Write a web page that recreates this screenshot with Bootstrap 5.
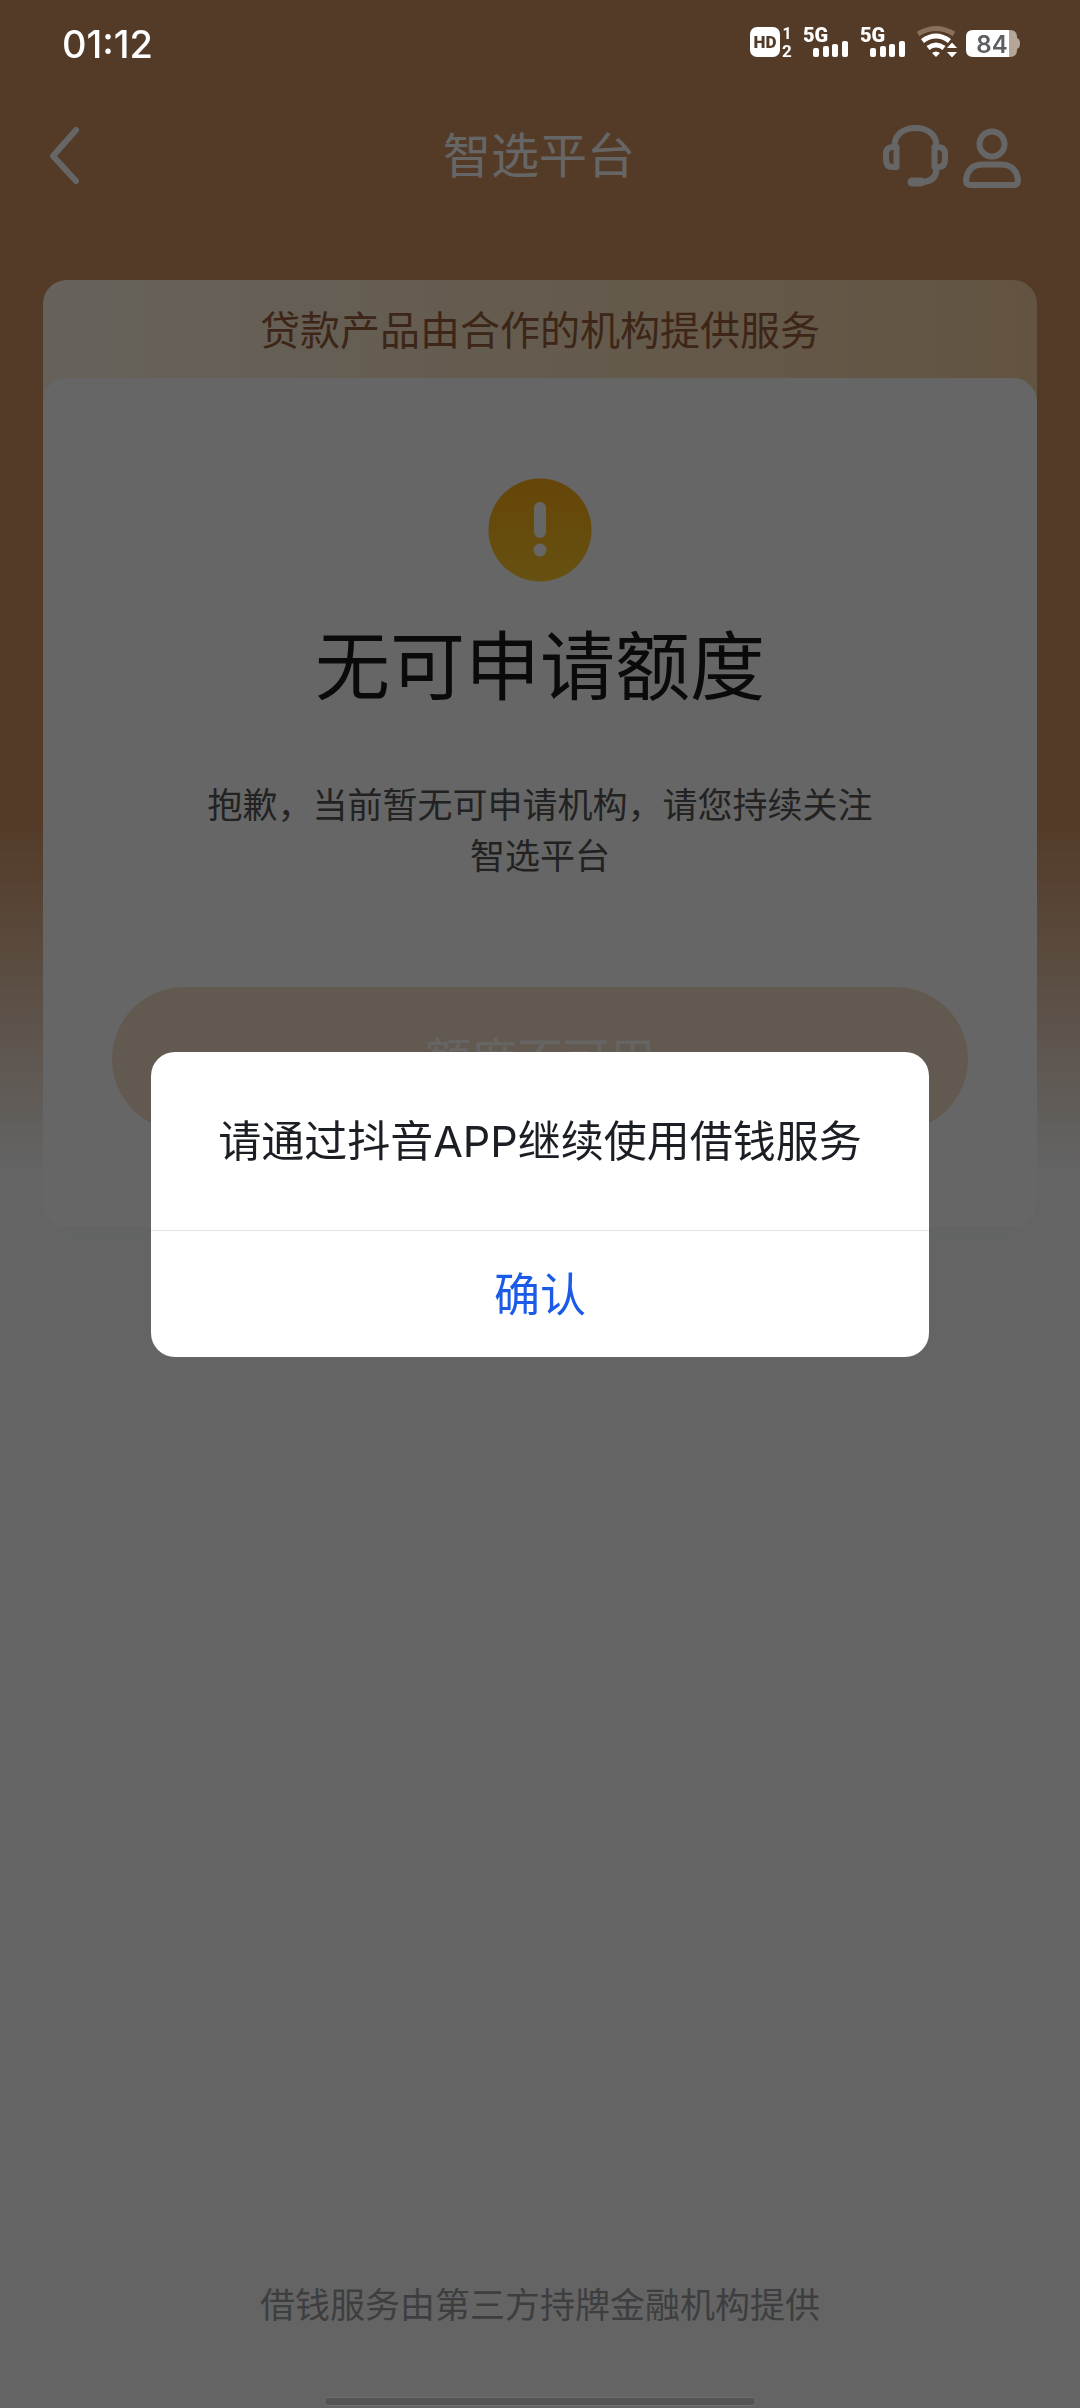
<!DOCTYPE html>
<html lang="zh-CN">
<head>
<meta charset="utf-8">
<meta name="viewport" content="width=device-width, initial-scale=1">
<title>智选平台</title>
<link href="https://cdn.jsdelivr.net/npm/bootstrap@5.3.0/dist/css/bootstrap.min.css" rel="stylesheet">
<style>
  body { font-family: Inter, "Noto Sans CJK SC", sans-serif; background: #fafafa; }
  .app-page { background: linear-gradient(180deg, #d29464 0, #d29464 824px, #fafafa 1170px); }
  .status-bar { height: 108px; padding: 24px 60px 48px 62px; z-index: 1060; color: #fff; }
  .clock { font-size: 38px; line-height: 40px; font-weight: 500; }
  .app-nav { display: grid; grid-template-columns: 1fr auto 1fr; height: 96px; padding: 0 50px 0 48px; }
  .app-nav h1 { font-size: 48px; line-height: 64px; }
  .icon-btn { color: #fff; }
  .loan-panel { margin: 76px 43px 0; border-radius: 24px; background: linear-gradient(90deg, #fff5e4, #f8d2a3); }
  .loan-note { font-size: 40px; line-height: 58px; padding: 22px 0 18px; color: #9a5f3a; }
  .loan-card { border: 0; border-radius: 24px; padding: 100px 69px 96px; box-shadow: 0 20px 10px -10px #f6fafa; }
  .loan-card h2 { font-size: 75px; line-height: 90px; margin: 40px 0 68px; color: #1a1a1a; }
  .loan-card p { font-size: 35px; line-height: 51px; width: 680px; margin: 0 auto 105px; color: #555; }
  .limit-btn { font-size: 46px; line-height: 144px; }
  .limit-btn:disabled { color: #fffcfa; background: #f5dfca; border: 0; opacity: 1; }
  .provider { font-size: 35px; line-height: 50px; margin-bottom: 78px; color: #999ca0; }
  .home-bar { width: 40%; height: 9px; bottom: 2px; z-index: 1060; background: #545454; border: 1px solid #707070; }
  .veil { --bs-backdrop-opacity: .6; }
  .app-modal { --bs-modal-width: 778px; --bs-modal-border-radius: 24px; --bs-modal-border-width: 0; }
  .modal-msg { font-size: 43px; line-height: 60px; padding: 59px 0; color: #1b1e24; border-bottom: 1px solid #e4e4e6; }
  .confirm-btn { font-size: 46px; line-height: 126px; color: #1c5be8; }
</style>
<script src="https://cdn.jsdelivr.net/npm/bootstrap@5.3.0/dist/js/bootstrap.bundle.min.js"></script>
</head>
<body>
<div class="app-page d-flex flex-column min-vh-100">
  <div class="status-bar position-relative d-flex justify-content-between">
    <time class="clock">01:12</time>
    <div class="d-flex align-items-start">
      <svg width="54" height="36" viewBox="0 0 54 36" fill="#fff" aria-label="HD 1 2">
        <rect y="3" width="30" height="30" rx="7"/>
        <text x="15" y="24" text-anchor="middle" font-family="Roboto" font-weight="900" font-size="17" fill="#533a27">HD</text>
        <text x="37" y="15" text-anchor="middle" font-family="Roboto" font-weight="700" font-size="16">1</text>
        <text x="37" y="33" text-anchor="middle" font-family="Roboto" font-weight="700" font-size="17">2</text>
      </svg>
      <svg width="57" height="36" viewBox="0 0 57 36" fill="#fff" aria-label="5G">
        <text x="-1" y="18" font-family="Roboto" font-weight="900" font-size="20">5G</text>
        <rect x="9" y="24" width="6" height="9" rx="2"/><rect x="19" y="22" width="6" height="11" rx="2"/><rect x="28" y="20" width="6" height="13" rx="2"/><rect x="38" y="17" width="6" height="16" rx="2"/>
      </svg>
      <svg width="56" height="36" viewBox="0 0 56 36" fill="#fff" aria-label="5G">
        <text x="-1" y="18" font-family="Roboto" font-weight="900" font-size="20">5G</text>
        <rect x="9" y="24" width="6" height="9" rx="2"/><rect x="19" y="22" width="6" height="11" rx="2"/><rect x="28" y="20" width="6" height="13" rx="2"/><rect x="38" y="17" width="6" height="16" rx="2"/>
      </svg>
      <svg width="49" height="36" viewBox="0 0 49 36" fill="none" stroke="#fff" stroke-width="5" aria-label="Wi-Fi">
        <path d="M1 10Q19-1 37 10" stroke="#87705c"/>
        <path d="M5.500 17Q19 7 32.500 17M11 24Q19 18 27 24"/>
        <path d="M15 29Q19 26 23 29L19 33Z" fill="#fff" stroke="none"/>
        <path d="M29 24.500L35 18L41 24.500ZM29 27.500H41L35 34Z" fill="#fff" stroke="#533a27" stroke-width="1"/>
      </svg>
      <svg width="54" height="36" viewBox="0 0 54 36" aria-label="84%">
        <path d="M7 6H43V33H7Q0 33 0 26V13Q0 6 7 6Z" fill="#fff"/>
        <path d="M43 6H44Q51 6 51 13V14Q54 15 54 19.500T51 25V26Q51 33 44 33H43Z" fill="#b5a698"/>
        <text x="26" y="29" text-anchor="middle" font-family="Inter" font-weight="600" font-size="24" fill="#5b5f61">84</text>
      </svg>
    </div>
  </div>

  <header class="app-nav align-items-center">
    <button type="button" class="icon-btn btn border-0 p-0 text-start" aria-label="返回">
      <svg width="34" height="64" viewBox="0 0 34 64" fill="none" stroke="currentColor" stroke-width="6" stroke-linecap="round" stroke-linejoin="round"><path d="M28 6L5 32L28 57"/></svg>
    </button>
    <h1 class="text-white fw-normal m-0">智选平台</h1>
    <div class="d-flex justify-content-end">
      <button type="button" class="icon-btn btn border-0 p-0" aria-label="客服">
        <svg width="82" height="64" viewBox="0 0 82 64" fill="none" stroke="currentColor" stroke-width="6" stroke-linecap="round" stroke-linejoin="round">
          <path d="M13.500 23V22C13.500 11 22 4 34.500 4S55.500 11 55.500 22V23"/>
          <path d="M15.500 23H12Q5 23 5 30V36Q5 43 12 43H15.500ZM53.500 23H57Q64 23 64 30V36Q64 43 57 43H53.500Z"/>
          <path d="M55.500 43Q56 57 42 58" /><path d="M31 58H40" stroke-width="9"/>
        </svg>
      </button>
      <button type="button" class="icon-btn btn border-0 p-0" aria-label="我的">
        <svg width="67" height="64" viewBox="0 0 67 64" fill="none" stroke="currentColor" stroke-width="6">
          <circle cx="29" cy="20" r="12.500"/><path d="M20 40.500H38Q53 40.500 55 56Q55 61 50 61H8Q3 61 3 56Q5 40.500 20 40.500Z"/>
        </svg>
      </button>
    </div>
  </header>

  <main class="loan-panel text-center">
    <div class="loan-note">贷款产品由合作的机构提供服务</div>
    <section class="loan-card card">
      <svg class="mx-auto" width="104" height="104" viewBox="0 0 104 104" aria-hidden="true">
        <defs><linearGradient id="warn" x2="0" y2="1"><stop stop-color="#ffad16"/><stop offset="1" stop-color="#ffcb2c"/></linearGradient></defs>
        <circle cx="52" cy="52" r="51.500" fill="url(#warn)"/><rect x="46" y="24" width="12" height="36" rx="6" fill="#fff"/><circle cx="52" cy="72" r="6.500" fill="#fff"/>
      </svg>
      <h2 class="fw-normal">无可申请额度</h2>
      <p>抱歉，当前暂无可申请机构，请您持续关注智选平台</p>
      <button type="button" class="limit-btn btn border-0 rounded-pill p-0 w-100" disabled>额度不可用</button>
    </section>
  </main>

  <footer class="provider mt-auto text-center">借钱服务由第三方持牌金融机构提供</footer>
</div>

<div class="veil modal-backdrop show"></div>
<div class="app-modal modal d-block" role="dialog" aria-modal="true" aria-labelledby="notice">
  <div class="modal-dialog modal-dialog-centered">
    <div class="modal-content text-center">
      <div class="modal-msg" id="notice">请通过抖音APP继续使用借钱服务</div>
      <button type="button" class="confirm-btn btn border-0 p-0">确认</button>
    </div>
  </div>
</div>
<div class="home-bar position-fixed start-50 translate-middle-x rounded-pill"></div>
</body>
</html>
